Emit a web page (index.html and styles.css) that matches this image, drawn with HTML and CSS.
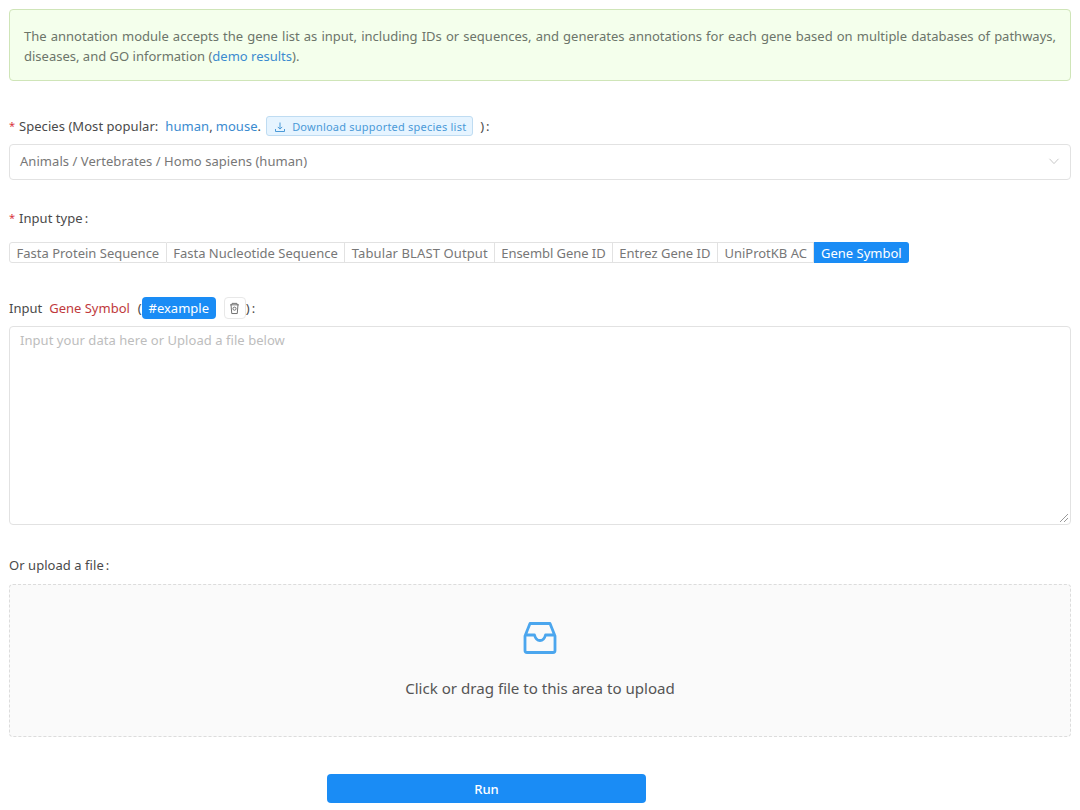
FILE: index.html
```html
<!DOCTYPE html>
<html lang="en">
<head>
<meta charset="utf-8">
<title>Annotation</title>
<link rel="stylesheet" href="styles.css">
</head>
<body>
<main class="page">
  <div class="alert">The annotation module accepts the gene list as input, including IDs or sequences, and generates annotations for each gene based on multiple databases of pathways, diseases, and GO information (<a class="link">demo results</a>).</div>

  <div class="label species-label">
    <span class="req">*</span><span>Species (Most popular:</span>
    <a class="link human">human</a><span class="comma">,</span> <a class="link mouse">mouse</a><span>.</span>
    <span class="dl-btn">
      <svg class="dl-icon" viewBox="0 0 12 12" width="12" height="12"><path d="M6 1.500v6.500M3.800 5.900 6 8.100l2.200-2.200M1.500 8v2.500h9V8" fill="none" stroke="currentColor" stroke-width="1"/></svg>
      Download supported species list
    </span>
    <span class="close-paren">):</span>
  </div>
  <div class="select">
    <span>Animals / Vertebrates / Homo sapiens (human)</span>
    <svg class="chev" viewBox="0 0 12 12" width="12" height="12"><path d="M1.500 3.800 6 8.600l4.500-4.800" fill="none" stroke="#c8c8c8" stroke-width="1"/></svg>
  </div>

  <div class="label type-label"><span class="req">*</span><span>Input type<span class="colon">:</span></span></div>
  <div class="tabs">
    <span class="tab">Fasta Protein Sequence</span>
    <span class="tab">Fasta Nucleotide Sequence</span>
    <span class="tab tab-wide">Tabular BLAST Output</span>
    <span class="tab tab-narrow">Ensembl Gene ID</span>
    <span class="tab">Entrez Gene ID</span>
    <span class="tab">UniProtKB AC</span>
    <span class="tab active">Gene Symbol</span>
  </div>

  <div class="label input-label">
    <span>Input</span><span class="red">Gene Symbol</span><span class="open-paren">(</span><span class="example">#example</span>
    <span class="trash">
      <svg viewBox="0 0 12 14" width="11" height="13"><path d="M1.200 3h9.600M3 3l.4-1.600h5.200L9 3M2.200 3l.8 9.500h6l.8-9.500" fill="none" stroke="#666" stroke-width="1"/><circle cx="6" cy="7.200" r="1.700" fill="none" stroke="#666" stroke-width="1"/></svg>
    </span>
    <span class="close-paren-input">):</span>
  </div>
  <div class="textarea">
    <span>Input your data here or Upload a file below</span>
    <svg class="grip" viewBox="0 0 10 10" width="10" height="10"><path d="M1 9 9 1M5 9 9 5" stroke="#999" stroke-width="1" fill="none"/></svg>
  </div>

  <div class="label upload-label"><span>Or upload a file<span class="colon">:</span></span></div>
  <div class="dropzone">
    <svg class="inbox" viewBox="0 0 34 34" width="34" height="34"><path d="M2 15 7 2.500h20L32 15v14.500a2 2 0 0 1-2 2H4a2 2 0 0 1-2-2Z M2 14h9.500c1 4 3 5.500 5.500 5.500s4.500-1.500 5.500-5.500H32" fill="none" stroke="#4ba6ee" stroke-width="2.800" stroke-linejoin="round"/></svg>
    <p>Click or drag file to this area to upload</p>
  </div>

  <div class="actions"><button class="run">Run</button></div>
</main>
</body>
</html>
```
FILE: styles.css
```css
* { box-sizing: border-box; }
html, body { margin: 0; padding: 0; background: #fff; }
body { font-family: "Noto Sans", "Open Sans", sans-serif; font-size: 13px; color: #555; height: 810px; overflow: hidden; }
.page { padding: 9px 9px 0; display: flex; flex-direction: column; }
.link { color: #3b8bd0; }
.alert { height: 72px; padding: 16px 14px; background: #f4ffec; border: 1px solid #cfe5b8; border-radius: 4px; color: #6c756a; line-height: 20px; text-align: justify; }
.label { display: flex; align-items: center; color: #4a4a4a; line-height: 20px; letter-spacing: .05px; }
.req { color: #d9363e; width: 10px; flex: none; font-size: 11px; }
.colon { margin-left: 2px; }
.species-label { margin-top: 35px; height: 20px; }
.human { margin-left: 7px; }
.comma { margin-right: 3px; }
.dl-btn { margin-left: 5px; height: 20px; width: 207px; padding: 1px 0 0 7px; display: inline-flex; align-items: center; gap: 6px; background: #e6f4ff; border: 1px solid #bfdcf2; border-radius: 3px; color: #4b9ad8; font-size: 11px; letter-spacing: .22px; white-space: nowrap; }
.dl-icon { flex: none; }
.close-paren { margin-left: 7px; letter-spacing: 2px; }
.select { margin-top: 8px; height: 36px; padding: 0 10px 2px; display: flex; align-items: center; justify-content: space-between; border: 1px solid #e2e2e2; border-radius: 4px; color: #777; letter-spacing: .05px; }
.type-label { margin-top: 28px; }
.tabs { margin-top: 14px; display: flex; height: 21px; }
.tab { padding: 0 6.500px; display: flex; align-items: center; border: 1px solid #e2e2e2; border-left-width: 0; color: #777; white-space: nowrap; }
.tab:first-child { border-left-width: 1px; border-radius: 3px 0 0 3px; }
.tab-wide { letter-spacing: .11px; }
.tab-narrow { padding: 0 6px; letter-spacing: -.05px; }
.tab.active { background: #1a8cf5; border-color: #1a8cf5; color: #fff; border-radius: 0 3px 3px 0; }
.input-label { margin-top: 34px; height: 22px; letter-spacing: 0; }
.red { color: #c0393c; margin-left: 7px; }
.open-paren { margin-left: 8px; }
.example { height: 22px; width: 74px; display: flex; align-items: center; justify-content: center; background: #1a8cf5; border-radius: 4px; color: #fff; }
.trash { margin-left: 8px; width: 22px; height: 22px; display: flex; align-items: center; justify-content: center; border: 1px solid #e8e8e8; border-radius: 4px; }
.close-paren-input { letter-spacing: 2px; }
.textarea { position: relative; margin-top: 7px; height: 199px; padding: 4px 10px; border: 1px solid #e2e2e2; border-radius: 4px; color: #bdbdbd; line-height: 18px; letter-spacing: .05px; }
.grip { position: absolute; right: 1px; bottom: 1px; }
.upload-label { margin-top: 30px; }
.dropzone { margin-top: 9px; height: 153px; display: flex; flex-direction: column; align-items: center; background: #fafafa; border: 1px dashed #dcdcdc; border-radius: 4px; padding-top: 36px; }
.inbox { flex: none; }
.dropzone p { margin: 23px 0 0; font-size: 15.100px; line-height: 20px; color: #555; }
.actions { margin-top: 37px; padding-left: 318px; }
.run { display: block; width: 319px; height: 29px; background: #1a8cf5; border: 0; border-radius: 4px; color: #fff; font: 500 13px "Noto Sans", sans-serif; }
```
